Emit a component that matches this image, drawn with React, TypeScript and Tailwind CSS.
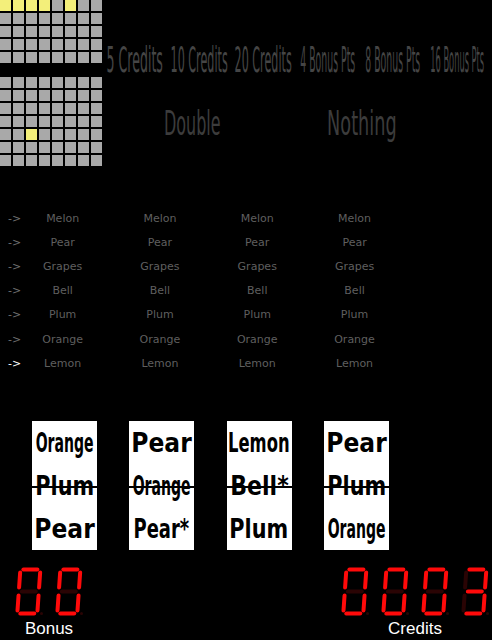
import React from "react";

const PAYOUTS = [
  { label: "5 Credits", scale: "scale-x-[0.35]" },
  { label: "10 Credits", scale: "scale-x-[0.31]" },
  { label: "20 Credits", scale: "scale-x-[0.31]" },
  { label: "4 Bonus Pts", scale: "scale-x-[0.26]" },
  { label: "8 Bonus Pts", scale: "scale-x-[0.26]" },
  { label: "16 Bonus Pts", scale: "scale-x-[0.23]" },
];

const SYMBOLS = ["Melon", "Pear", "Grapes", "Bell", "Plum", "Orange", "Lemon"];

// words are squeezed so each one fills the reel window
const WORD_SCALE: Record<string, string> = {
  Orange: "scale-x-[0.54]",
  Plum: "scale-x-[0.8]",
  Pear: "scale-x-[0.9]",
  "Pear*": "scale-x-[0.69]",
  Lemon: "scale-x-[0.63]",
  "Bell*": "scale-x-[0.85]",
};

const REELS = [
  ["Orange", "Plum", "Pear"],
  ["Pear", "Orange", "Pear*"],
  ["Lemon", "Bell*", "Plum"],
  ["Pear", "Plum", "Orange"],
];

const SEGMENTS: Record<string, [number, number, number, number]> = {
  a: [3, 0, 18, 4],
  b: [20, 3, 4, 19],
  c: [20, 26, 4, 19],
  d: [3, 44, 18, 4],
  e: [0, 26, 4, 19],
  f: [0, 3, 4, 19],
  g: [3, 22, 18, 4],
};

const DIGITS: Record<string, string> = {
  "0": "abcdef",
  "1": "bc",
  "2": "abdeg",
  "3": "abcdg",
  "4": "bcfg",
  "5": "acdfg",
  "6": "acdefg",
  "7": "abc",
  "8": "abcdefg",
  "9": "abcdfg",
};

function CellGrid({ rows, lit }: { rows: number; lit: number[] }) {
  return (
    <div className="grid grid-cols-[repeat(8,11px)] gap-[2px]">
      {Array.from({ length: rows * 8 }).map((_, i) => (
        <div
          key={i}
          className={`h-[11px] w-[11px] ${lit.includes(i) ? "bg-[#f3ef7a]" : "bg-[#a9a9a9]"}`}
        />
      ))}
    </div>
  );
}

function Digit({ value }: { value: string }) {
  const on = DIGITS[value] ?? "";
  return (
    <svg width="28" height="49" viewBox="0 0 28 49">
      <g transform="translate(3.5 0.5) skewX(-4)">
        {Object.entries(SEGMENTS).map(([key, [x, y, w, h]]) => (
          <rect
            key={key}
            x={x}
            y={y}
            width={w}
            height={h}
            rx="2"
            fill={on.includes(key) ? "#ff0a0a" : "#2a0404"}
          />
        ))}
      </g>
      <circle cx="26.5" cy="46.5" r="1.5" fill="#2a0404" />
    </svg>
  );
}

function Counter({ value, label }: { value: string; label: string }) {
  return (
    <div className="flex flex-col items-center">
      <div className="flex gap-[12px]">
        {value.split("").map((d, i) => (
          <Digit key={i} value={d} />
        ))}
      </div>
      <div className="mt-[4px] font-['Liberation_Sans',Arial,sans-serif] text-[17px] leading-none text-white">
        {label}
      </div>
    </div>
  );
}

export default function App() {
  return (
    <div className="flex h-[640px] w-[492px] flex-col overflow-hidden bg-black font-['DejaVu_Sans',sans-serif]">
      {/* Lamp grids + pay table */}
      <div className="flex h-[166px]">
        <div className="flex w-[102px] flex-col">
          <CellGrid rows={5} lit={[0, 1, 2, 3, 5]} />
          <div className="mt-[14px]">
            <CellGrid rows={7} lit={[34]} />
          </div>
        </div>
        <div className="flex flex-col">
          <div className="mt-[42px] flex">
            {PAYOUTS.map((p) => (
              <div key={p.label} className="flex w-[64.6px] justify-center">
                <span
                  className={`inline-block whitespace-nowrap text-[36px] leading-none text-[#454545] ${p.scale}`}
                >
                  {p.label}
                </span>
              </div>
            ))}
          </div>
          <div className="mt-[28px] flex">
            <div className="flex w-[180px] justify-center">
              <span className="inline-block whitespace-nowrap text-[34px] leading-none text-[#3c3c3c] scale-x-[0.47]">
                Double
              </span>
            </div>
            <div className="flex w-[160px] justify-center">
              <span className="inline-block whitespace-nowrap text-[34px] leading-none text-[#3c3c3c] scale-x-[0.52]">
                Nothing
              </span>
            </div>
          </div>
        </div>
      </div>

      {/* Reel strips */}
      <div className="mt-[41px] flex flex-col">
        {SYMBOLS.map((s, row) => (
          <div key={s} className="flex h-[24.17px] items-center text-[11px]">
            <div
              className={`w-[14px] whitespace-nowrap pl-[8px] ${row === SYMBOLS.length - 1 ? "text-white" : "text-[#707070]"}`}
            >
              -&gt;
            </div>
            {[0, 1, 2, 3].map((col) => (
              <div key={col} className="w-[97.3px] text-center text-[#5f5f5f]">
                {s}
              </div>
            ))}
          </div>
        ))}
      </div>

      {/* Reel windows */}
      <div className="mt-[45px] flex gap-[32.3px] pl-[32px]">
        {REELS.map((reel, i) => (
          <div key={i} className="flex h-[129px] w-[65px] flex-col bg-white">
            {reel.map((word, j) => (
              <div key={j} className="relative flex h-[43px] items-center justify-center">
                <span
                  className={`inline-block whitespace-nowrap text-[26px] font-bold leading-none text-black ${WORD_SCALE[word]}`}
                >
                  {word}
                </span>
                {j === 1 && <div className="absolute left-0 right-0 top-[22px] h-[2px] bg-black" />}
              </div>
            ))}
          </div>
        ))}
      </div>

      {/* Counters */}
      <div className="mt-[17px] flex items-start justify-between pl-[15px] pr-[3px]">
        <Counter value="00" label="Bonus" />
        <Counter value="0003" label="Credits" />
      </div>
    </div>
  );
}
